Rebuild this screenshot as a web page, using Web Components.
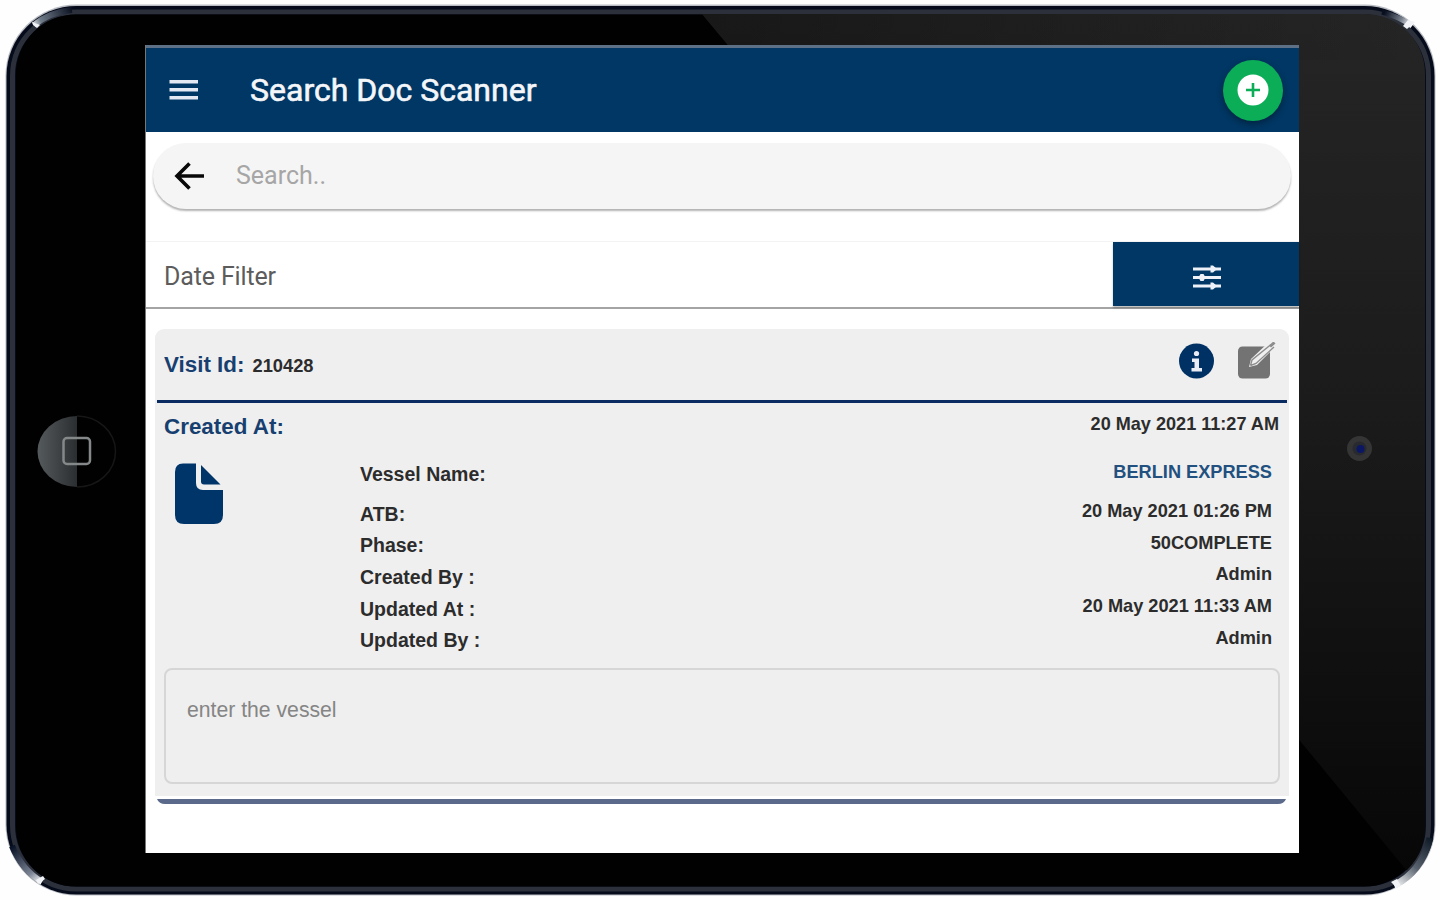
<!DOCTYPE html>
<html lang="en">
<head>
<meta charset="utf-8">
<title>Search Doc Scanner</title>
<style>
  body {
    margin: 0;
    background: #fefefe;
    font-family: "Liberation Sans", Arial, sans-serif;
    --navy: #003764;
    --card: #efefef;
  }
</style>
</head>
<body>
<tablet-frame>
  <app-header heading="Search Doc Scanner"></app-header>
  <search-bar>Search..</search-bar>
  <date-filter>Date Filter</date-filter>
  <visit-card visit="210428" created="20 May 2021 11:27 AM" note="enter the vessel">
    <visit-row tall link label="Vessel Name:">BERLIN EXPRESS</visit-row>
    <visit-row label="ATB:">20 May 2021 01:26 PM</visit-row>
    <visit-row label="Phase:">50COMPLETE</visit-row>
    <visit-row label="Created By :">Admin</visit-row>
    <visit-row label="Updated At :">20 May 2021 11:33 AM</visit-row>
    <visit-row label="Updated By :">Admin</visit-row>
  </visit-card>
</tablet-frame>

<script>
customElements.define('tablet-frame',
class extends HTMLElement {
  constructor() {
    super();
    this.attachShadow({ mode: 'open' });
    this.shadowRoot.innerHTML = `
      <style>
        :host {
          display: grid;
          grid-template-columns: 146px 1153px 1fr;
          width: 1440px;
          height: 900px;
          box-sizing: border-box;
          padding-top: 45px;
          position: relative;
          overflow: hidden;
        }
        /* the body of the device lies under the screen */
        .body {
          position: absolute;
          inset: 0;
          z-index: -1;
        }
        .screen {
          grid-column: 2;
          height: 808px;
          box-sizing: border-box;
          border-top: 3px solid #5d7085;
          background: #fff;
          box-shadow: -1px 0 0 #777;
        }
      </style>
      <svg class="body" width="1440" height="900" viewBox="0 0 1440 900">
        <defs>
          <linearGradient id="gloss" x1="0" y1="0" x2="0" y2="1">
            <stop offset="0" stop-color="#252525"/>
            <stop offset=".45" stop-color="#1b1b1b"/>
            <stop offset="1" stop-color="#060606"/>
          </linearGradient>
          <linearGradient id="fade" x1="0" x2="1">
            <stop offset="0" stop-color="#000" stop-opacity=".35"/>
            <stop offset="1" stop-color="#000" stop-opacity="0"/>
          </linearGradient>
          <linearGradient id="home" x1="0" x2="1">
            <stop offset="0" stop-color="#555a5d"/>
            <stop offset="1" stop-color="#2b2e30"/>
          </linearGradient>
          <linearGradient id="tl" gradientUnits="userSpaceOnUse" x1="32" y1="28" x2="72" y2="9">
            <stop offset="0" stop-color="#fff"/>
            <stop offset=".25" stop-color="#6f7b88"/>
            <stop offset="1" stop-color="#0a1020"/>
          </linearGradient>
          <linearGradient id="tr" gradientUnits="userSpaceOnUse" x1="1412" y1="25" x2="1385" y2="12">
            <stop offset="0" stop-color="#fff"/>
            <stop offset=".4" stop-color="#77808c"/>
            <stop offset="1" stop-color="#0a1020"/>
          </linearGradient>
          <linearGradient id="bl" gradientUnits="userSpaceOnUse" x1="42" y1="882" x2="14" y2="846">
            <stop offset="0" stop-color="#fff"/>
            <stop offset=".3" stop-color="#7b8494"/>
            <stop offset="1" stop-color="#0a1428"/>
          </linearGradient>
          <linearGradient id="br" gradientUnits="userSpaceOnUse" x1="1394" y1="886" x2="1432" y2="838">
            <stop offset="0" stop-color="#fff"/>
            <stop offset=".45" stop-color="#59636f"/>
            <stop offset="1" stop-color="#0c1724"/>
          </linearGradient>
          <clipPath id="glass"><rect x="17" y="14" width="1408" height="873" rx="60"/></clipPath>
        </defs>
        <rect x="5.500" y="4.500" width="1430" height="891" rx="71" fill="#b9bcc2"/>
        <rect x="6.500" y="6" width="1428" height="888.500" rx="70" fill="#050b1a"/>
        <rect x="12.500" y="12" width="1416" height="877" rx="64" fill="none" stroke="#2b303b" stroke-width="5"/>
        <rect x="16" y="14.500" width="1408" height="872" rx="60" fill="#010101"/>
        <g clip-path="url(#glass)">
          <path d="M702 14H1426V894L727 44Z" fill="url(#gloss)"/>
          <path d="M702 14H1426V60H740Z" fill="url(#fade)"/>
        </g>
        <g fill="none" stroke-width="6">
          <path d="M34 25Q50 12 72 10" stroke="url(#tl)"/>
          <path d="M1412 26Q1400 17 1382 12" stroke="url(#tr)" stroke-width="5"/>
          <path d="M42 882Q22 870 12 846" stroke="url(#bl)"/>
          <path d="M1394 885Q1421 873 1430 838" stroke="url(#br)" stroke-width="7"/>
        </g>
        <path d="M32 22l8 3-3 3-4-3zM1408 20l7 2-8 7-4-3zM36 880l7-4 2 3-7 5zM1391 882l6-3 4 7-4 2z" fill="#f1f3f6"/>
        <path d="M77 416A39.500 35.500 0 0 0 77 487Z" fill="url(#home)"/>
        <path d="M77 416A38.500 35.500 0 0 1 77 487" fill="none" stroke="#161616" stroke-width="1.500"/>
        <rect x="63.500" y="438" width="26.500" height="26" rx="3.500" fill="none" stroke="#858889" stroke-width="2.500"/>
        <circle cx="1359.500" cy="448.500" r="12.500" fill="#353536"/>
        <circle cx="1359.500" cy="448.500" r="7" fill="#292a30"/>
        <circle cx="1360.500" cy="449" r="4" fill="#0b1763"/>
      </svg>
      <div class="screen"><slot></slot></div>
    `;
  }
})

customElements.define('app-header',
class extends HTMLElement {
  constructor() {
    super();
    this.attachShadow({ mode: 'open' });
    this.shadowRoot.innerHTML = `
      <style>
        :host {
          display: flex;
          align-items: center;
          height: 84px;
          box-sizing: border-box;
          padding: 0 16px 0 23px;
          background: var(--navy);
          color: #f4f6fa;
        }
        h1 {
          flex: 1;
          margin: 0 0 0 51px;
          font-family: Roboto, sans-serif;
          font-size: 32px;
          font-weight: 400;
          -webkit-text-stroke: .6px;
          line-height: 40px;
        }
        .add {
          display: grid;
          place-items: center;
          width: 60px;
          height: 61px;
          border-radius: 50%;
          background: #0bad57;
          box-shadow: 0 3px 6px rgba(0, 0, 0, .35);
        }
      </style>
      <svg width="30" height="24" viewBox="0 0 30 24" fill="#e3e8f2">
        <path d="M.500 2h28.500v3.500H.500zM.500 10h28.500v3.500H.500zM.500 18h28.500v3.500H.500z"/>
      </svg>
      <h1></h1>
      <div class="add">
        <svg width="32" height="32" viewBox="0 0 32 32">
          <circle cx="16" cy="16" r="15.500" fill="#fff"/>
          <path d="M16 9v14M9 16h14" stroke="#0bad57" stroke-width="2.600"/>
        </svg>
      </div>
    `;
  }
  connectedCallback() {
    this.shadowRoot.querySelector('h1').textContent = this.getAttribute('heading');
  }
})

customElements.define('search-bar',
class extends HTMLElement {
  constructor() {
    super();
    this.attachShadow({ mode: 'open' });
    this.shadowRoot.innerHTML = `
      <style>
        :host {
          display: flex;
          align-items: center;
          gap: 32px;
          height: 66px;
          margin: 11px 8px 0 7px;
          padding-left: 20px;
          box-sizing: border-box;
          border-radius: 33px;
          background: #f5f5f5;
          box-shadow: 0 2px 2px rgba(0, 0, 0, .3);
          color: #a6a6a6;
          font-family: Roboto, sans-serif;
          font-size: 25px;
          line-height: 30px;
        }
      </style>
      <svg width="31" height="30" viewBox="0 0 31 30" fill="none" stroke="#080808" stroke-width="3.600">
        <path d="M31 15H4M16.500 2.500L4 15l12.500 12.500"/>
      </svg>
      <span><slot></slot></span>
    `;
  }
})

customElements.define('date-filter',
class extends HTMLElement {
  constructor() {
    super();
    this.attachShadow({ mode: 'open' });
    this.shadowRoot.innerHTML = `
      <style>
        :host {
          display: flex;
          justify-content: space-between;
          margin-top: 32px;
          height: 68px;
          box-sizing: border-box;
          border-top: 1px solid #f3f3f3;
          border-bottom: 2px solid #a4a4a4;
          color: #5c5c5c;
          font-family: Roboto, sans-serif;
          font-size: 25px;
          letter-spacing: -.15px;
          line-height: 70px;
        }
        span {
          padding-left: 18px;
        }
        .tune {
          display: grid;
          place-items: center;
          width: 186px;
          height: 64px;
          background: var(--navy);
          box-shadow: 0 2px 2px rgba(0, 0, 0, .25);
        }
      </style>
      <span><slot></slot></span>
      <div class="tune">
        <svg width="30" height="28" viewBox="0 0 30 28" fill="#eef2f8" transform="translate(1 4)">
          <path d="M1 3.500h28v3H1zM1 12h28v3H1zM1 20.500h28v3H1z"/>
          <path d="M18.500 1.500h2.500L25 5l-4 3.500h-2.500zM8.500 10h3l2 3.500-2 3.500h-3l-2-3.500zM18.500 18.500h2.500l4 3.500-4 3.500h-2.500z"/>
        </svg>
      </div>
    `;
  }
})

customElements.define('visit-row',
class extends HTMLElement {
  constructor() {
    super();
    this.attachShadow({ mode: 'open' });
    this.shadowRoot.innerHTML = `
      <style>
        :host {
          display: flex;
          justify-content: space-between;
          height: 31.700px;
          line-height: 32px;
          font-weight: 700;
          color: #2c2c2c;
        }
        :host([tall]) {
          height: 39.500px;
        }
        :host([link]) .value {
          color: #22507f;
        }
        .label {
          font-size: 19.500px;
        }
        .value {
          font-size: 18.200px;
          margin-top: -2.500px;
        }
      </style>
      <span class="label"></span>
      <span class="value"><slot></slot></span>
    `;
  }
  connectedCallback() {
    this.shadowRoot.querySelector('.label').textContent = this.getAttribute('label');
  }
})

customElements.define('visit-card',
class extends HTMLElement {
  constructor() {
    super();
    this.attachShadow({ mode: 'open' });
    this.shadowRoot.innerHTML = `
      <style>
        :host {
          display: block;
          margin: 20px 10px 0 9px;
        }
        .card {
          height: 467px;
          box-sizing: border-box;
          padding: 0 2px;
          border-radius: 9px 9px 0 0;
          background: var(--card);
        }
        header {
          display: flex;
          align-items: center;
          height: 71px;
          box-sizing: border-box;
          padding: 0 11px 0 7px;
        }
        .key {
          color: #173f70;
          font-size: 22.400px;
          font-weight: 700;
        }
        .id {
          flex: 1;
          margin: 2px 0 0 8px;
          font-size: 18.300px;
          font-weight: 700;
          color: #2c2c2c;
        }
        header svg {
          margin-top: -7px;
        }
        header svg + svg {
          margin-left: 23px;
        }
        .rule {
          height: 3px;
          background: #0b2c63;
        }
        .created {
          display: flex;
          justify-content: space-between;
          height: 51px;
          padding: 0 8px 0 7px;
          line-height: 48px;
        }
        .when {
          color: #2c2c2c;
          font-size: 18.100px;
          font-weight: 700;
          line-height: 42px;
        }
        .detail {
          display: grid;
          grid-template-columns: 203px 1fr;
          height: 211px;
          padding-right: 15px;
        }
        .doc {
          margin: 8px 0 0 17px;
        }
        .rows {
          padding-top: 4px;
        }
        .note {
          height: 116px;
          margin: 3px 7px 0;
          padding: 26px 21px;
          box-sizing: border-box;
          border: 2px solid #d6d6d6;
          border-radius: 8px;
          color: #858585;
          font-size: 21.200px;
          line-height: 28px;
        }
        .foot {
          display: block;
          margin: 2px 0 0 2px;
        }
      </style>
      <div class="card">
        <header>
          <span class="key">Visit Id:</span>
          <span class="id"></span>
          <svg width="37" height="37" viewBox="0 0 37 37">
            <circle cx="18.500" cy="18" r="17.500" fill="#003164"/>
            <circle cx="18.500" cy="10.500" r="2.600" fill="#e9edf3"/>
            <path d="M14 15.500h7V25h3v3.500H13.500V25h3v-6H14z" fill="#e9edf3"/>
          </svg>
          <svg width="38" height="38" viewBox="0 0 38 38">
            <rect x="0" y="4.500" width="32" height="32" rx="4.500" fill="#737373"/>
            <path d="M11 25l2-8L31 0h7v4L19 23z" fill="var(--card)"/>
            <path d="M12.500 23.500l1.500-5.500L33 2.500M12.500 23.500l5.500-2L36 5" fill="none" stroke="#8d8d8d" stroke-width="1.400"/>
            <path d="M32 4.500L36.500.500" stroke="#8d8d8d" stroke-width="3"/>
          </svg>
        </header>
        <div class="rule"></div>
        <div class="created">
          <span class="key">Created At:</span>
          <span class="when"></span>
        </div>
        <div class="detail">
          <svg class="doc" width="50" height="64" viewBox="0 0 50 64" fill="#00356a">
            <path d="M9 1.500H22V21Q22 28 29 28H49V53Q49 62 40 62H10Q1 62 1 53V10Q1 1.500 9 1.500Z"/>
            <path d="M27 3L46.500 22.500H30Q27 22.500 27 19.500Z"/>
          </svg>
          <div class="rows"><slot></slot></div>
        </div>
        <div class="note"></div>
      </div>
      <svg class="foot" width="1129" height="7" viewBox="0 0 1129 7">
        <path d="M0 1H1129Q1127 6 1121 6H8Q2 6 0 1Z" fill="#5b6a8b"/>
      </svg>
    `;
  }
  connectedCallback() {
    let find = (s) => this.shadowRoot.querySelector(s);
    find('.id').textContent = this.getAttribute('visit');
    find('.when').textContent = this.getAttribute('created');
    find('.note').textContent = this.getAttribute('note');
  }
})
</script>
</body>
</html>
